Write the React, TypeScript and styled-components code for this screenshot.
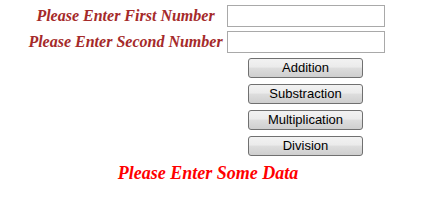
import React from 'react'
import styled, { createGlobalStyle } from 'styled-components'

const GlobalStyle = createGlobalStyle`
  html, body {
    margin: 0;
    padding: 0;
    background: #fff;
  }
`

export default function App() {
    const operations = ['Addition', 'Substraction', 'Multiplication', 'Division']

    return (
        <Page>
            <GlobalStyle />
            <Form>
                <Label>Please Enter First Number</Label>
                <Field><Input type="text" /></Field>
                <Label>Please Enter Second Number</Label>
                <Field><Input type="text" /></Field>
                <Spacer />
                <Buttons>
                    {operations.map(op => (
                        <Button key={op}>{op}</Button>
                    ))}
                </Buttons>
            </Form>
            <Result>Please Enter Some Data</Result>
        </Page>
    )
}

const Page = styled.div`
    width: 416px;
    padding: 5px 0 0 8px;
`

const Form = styled.div`
    display: grid;
    grid-template-columns: 219px 160px;
    row-gap: 4px;
    align-items: center;
`

const Label = styled.div`
    padding-left: 16px;
    font-family: "Liberation Serif", "Times New Roman", serif;
    font-weight: bold;
    font-style: italic;
    font-size: 16px;
    color: #a52a2a;
    text-align: center;
    white-space: nowrap;
`

const Field = styled.div`
    display: flex;
`

const Input = styled.input`
    width: 158px;
    height: 22px;
    box-sizing: border-box;
    border: 1px solid #a9a9a9;
    margin: 0;
    padding: 1px 2px;
    background: #fff;
    outline: none;
`

const Spacer = styled.div``

const Buttons = styled.div`
    display: flex;
    flex-direction: column;
    align-items: center;
    gap: 6px;
    padding-top: 1px;
    padding-right: 3px;
`

const Button = styled.button`
    width: 115px;
    height: 20px;
    box-sizing: border-box;
    border: 1px solid #707070;
    border-radius: 3px;
    background: linear-gradient(#f2f2f2 0%, #ebebeb 45%, #dddddd 50%, #cfcfcf 100%);
    font-family: "Liberation Sans", Arial, sans-serif;
    font-size: 13px;
    color: #000;
    padding: 0;
    margin: 0;
    line-height: 18px;
`

const Result = styled.div`
    width: 400px;
    margin-top: 7px;
    text-align: center;
    font-family: "Liberation Serif", "Times New Roman", serif;
    font-weight: bold;
    font-style: italic;
    font-size: 18px;
    color: #ff0000;
`
